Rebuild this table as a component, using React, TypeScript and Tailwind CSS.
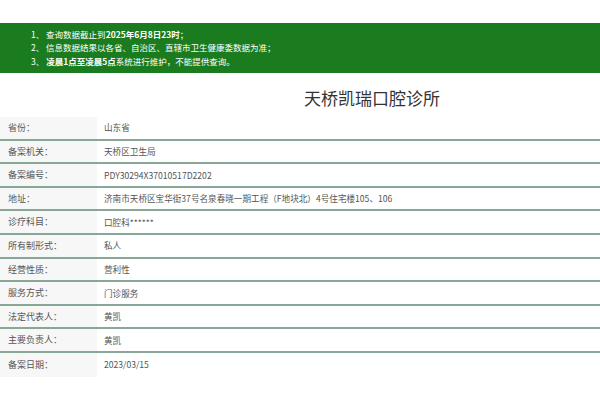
const rows: Array<[string, string]> = [
  ['省份：', '山东省'],
  ['备案机关：', '天桥区卫生局'],
  ['备案编号：', 'PDY30294X37010517D2202'],
  ['地址：', '济南市天桥区宝华街37号名泉春晓一期工程（F地块北）4号住宅楼105、106'],
  ['诊疗科目：', '口腔科******'],
  ['所有制形式：', '私人'],
  ['经营性质：', '营利性'],
  ['服务方式：', '门诊服务'],
  ['法定代表人：', '黄凯'],
  ['主要负责人：', '黄凯'],
  ['备案日期：', '2023/03/15'],
]

export default function App() {
  return (
    <div
      className="h-[400px] w-[600px] overflow-hidden bg-white pt-[23px]"
      style={{ fontFamily: '"Noto Sans CJK SC", "Noto Sans", sans-serif' }}
    >
      {/* Notice banner */}
      <div className="flex h-[50px] flex-col justify-center bg-[#1a7c1e] pl-[31px] text-[8.5px] leading-[13.5px] text-white">
        <p>
          1、 查询数据截止到<b>2025年6月8日23时</b>；
        </p>
        <p>2、 信息数据结果以各省、自治区、直辖市卫生健康委数据为准；</p>
        <p>
          3、 <b>凌晨1点至凌晨5点</b>系统进行维护，不能提供查询。
        </p>
      </div>

      {/* Title */}
      <h1 className="h-[44px] pl-[304px] pt-[14px] text-[17px] leading-[22px] text-[#333]">天桥凯瑞口腔诊所</h1>

      {/* Detail table */}
      <div>
        {rows.map(([label, value], i) => (
          <div
            key={label}
            className={`flex h-[23.6px] text-[#555] ${
              i < rows.length - 1 ? 'border-b-2 border-[#88a796]' : ''
            }`}
          >
            <div className="flex w-[97px] items-center bg-[#f7f7f7] pl-[8px] text-[9px]">{label}</div>
            <div className="flex items-center pl-[7px] text-[8.6px]">{value}</div>
          </div>
        ))}
      </div>
    </div>
  )
}
